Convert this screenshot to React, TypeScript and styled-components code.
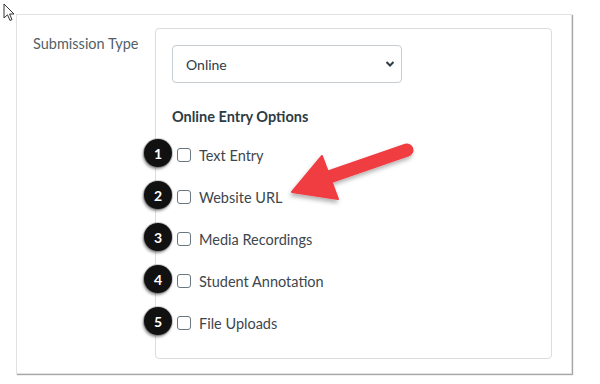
import styled, { createGlobalStyle } from "styled-components"

const GlobalStyle = createGlobalStyle`
  html, body {
    margin: 0;
    padding: 0;
    background: #ffffff;
  }
  body {
    font-family: Lato, "Liberation Sans", sans-serif;
    color: #2d3b45;
  }
`

const options = [
  "Text Entry",
  "Website URL",
  "Media Recordings",
  "Student Annotation",
  "File Uploads",
]

const App = () => {
  return (
    <Page>
      <GlobalStyle />
      <Cursor viewBox="0 0 12 19" width="12" height="19">
        <path
          d="M1 1 L1 15 L4.5 11.8 L7 17.5 L9 16.6 L6.6 11 L11 11 Z"
          fill="#fff"
          stroke="#333"
          strokeWidth="1"
          strokeLinejoin="round"
        />
      </Cursor>
      <Card>
        <Label>Submission Type</Label>
        <Box>
          <SelectWrap>
            <span>Online</span>
            <svg width="10" height="8" viewBox="0 0 10 8">
              <path d="M1.5 2 L5 5.5 L8.5 2" fill="none" stroke="#2d3b45" strokeWidth="2" />
            </svg>
          </SelectWrap>
          <Heading>Online Entry Options</Heading>
          <List>
            {options.map((o, i) => (
              <Row key={o}>
                <Badge>{i + 1}</Badge>
                <Check />
                <OptionText>{o}</OptionText>
              </Row>
            ))}
          </List>
          <Arrow viewBox="0 0 140 75" width="140" height="75">
            <defs>
              <filter id="sh" x="-20%" y="-20%" width="150%" height="160%">
                <feDropShadow dx="-1" dy="3" stdDeviation="2.2" floodColor="#000" floodOpacity="0.3" />
              </filter>
            </defs>
            <g filter="url(#sh)" fill="#f03c42">
              <line x1="126" y1="15" x2="45" y2="43" stroke="#f03c42" strokeWidth="13" strokeLinecap="round" />
              <path d="M11 57 L41 21 L57 64 Z" strokeLinejoin="round" stroke="#f03c42" strokeWidth="2" />
            </g>
          </Arrow>
        </Box>
      </Card>
    </Page>
  )
}

const Page = styled.div`
  position: relative;
  width: 600px;
  height: 384px;
  padding: 14px 0 0 16px;
  box-sizing: border-box;
`

const Cursor = styled.svg`
  position: absolute;
  left: 3px;
  top: 3px;
`

const Card = styled.div`
  display: flex;
  width: 556px;
  height: 360px;
  box-sizing: border-box;
  border: 1px solid #e2e2e2;
  box-shadow: 1px 1px 1px rgba(0, 0, 0, 0.35);
  padding: 13px 19px 14px 0;
`

const Label = styled.div`
  width: 138px;
  box-sizing: border-box;
  padding: 7px 0 0 16px;
  font-size: 14.5px;
  color: #555f66;
`

const Box = styled.div`
  position: relative;
  flex: 1;
  border: 1px solid #dcdcdc;
  border-radius: 4px;
  padding: 16px 16px 0 16px;
`

const SelectWrap = styled.div`
  display: flex;
  align-items: center;
  justify-content: space-between;
  width: 230px;
  height: 38px;
  box-sizing: border-box;
  border: 1px solid #c7cdd1;
  border-radius: 4px;
  padding: 0 6px 0 13px;
  font-size: 14px;
  color: #2d3b45;
`

const Heading = styled.div`
  margin-top: 25px;
  font-size: 14.5px;
  font-weight: 700;
  color: #2d3b45;
`

const List = styled.div`
  display: flex;
  flex-direction: column;
  margin-top: 9px;
`

const Row = styled.div`
  position: relative;
  display: flex;
  align-items: center;
  height: 42px;
  padding-left: 5px;
`

const Badge = styled.div`
  position: absolute;
  left: -28px;
  top: 5px;
  width: 28px;
  height: 28px;
  border-radius: 50%;
  background: #111;
  color: #fff;
  font-size: 14px;
  font-weight: 700;
  display: flex;
  align-items: center;
  justify-content: center;
  box-shadow: -1px 2px 3px rgba(0, 0, 0, 0.45), 0 0 0 1px rgba(120, 120, 120, 0.35);
`

const Check = styled.div`
  width: 12px;
  height: 12px;
  border: 1px solid #6b7780;
  border-radius: 3px;
  background: #fff;
  margin-right: 8px;
`

const OptionText = styled.span`
  font-size: 14.5px;
  color: #3d464d;
`

const Arrow = styled.svg`
  position: absolute;
  left: 125px;
  top: 106px;
`

export default App
